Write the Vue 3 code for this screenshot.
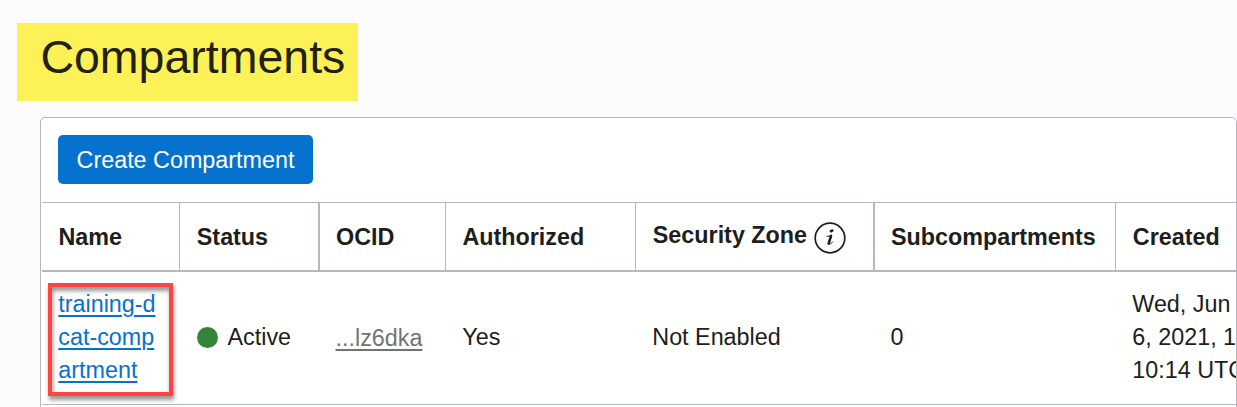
<script setup>
const columns = [
  { key: 'name', label: 'Name' },
  { key: 'status', label: 'Status', thick: true },
  { key: 'ocid', label: 'OCID' },
  { key: 'authorized', label: 'Authorized' },
  { key: 'zone', label: 'Security Zone', info: true, thick: true },
  { key: 'subs', label: 'Subcompartments' },
  { key: 'created', label: 'Created', last: true },
]
const nameLines = ['training-d', 'cat-comp', 'artment']
const createdLines = ['Wed, Jun', '6, 2021, 1', '10:14 UTC']
</script>

<template>
  <main class="page">
    <h1 class="title">Compartments</h1>
    <section class="panel">
      <div class="toolbar">
        <button class="create" type="button">Create Compartment</button>
      </div>
      <div class="grid head">
        <div
          v-for="c in columns"
          :key="c.key"
          class="th"
          :class="[c.key, { thick: c.thick, last: c.last }]"
        >
          <span>{{ c.label }}</span>
          <svg v-if="c.info" class="info" width="32" height="32" viewBox="0 0 32 32">
            <circle cx="16" cy="16" r="14.8" fill="none" stroke="#201e1c" stroke-width="1.7" />
            <ellipse cx="17.6" cy="8.8" rx="2.1" ry="1.5" fill="#201e1c" transform="rotate(-20 17.6 8.8)" />
            <path d="M13 14.4 C14.6 14.3 16 13.9 17.8 13.1 L15.2 21.2 C14.9 22.9 16.4 22.4 18.8 19.8" fill="none" stroke="#201e1c" stroke-width="1" stroke-linecap="round" />
            <path d="M17 13.9 L14.6 21.6" fill="none" stroke="#201e1c" stroke-width="2.5" stroke-linecap="round" />
          </svg>
        </div>
      </div>
      <div class="grid row">
        <div class="name-cell">
          <div class="frame">
            <a class="link"><span v-for="l in nameLines" :key="l" class="line">{{ l }}</span></a>
          </div>
        </div>
        <div class="td active"><span class="dot"></span>Active</div>
        <div class="td ocid-cell"><span class="ocid-link">...lz6dka</span></div>
        <div class="td">Yes</div>
        <div class="td">Not Enabled</div>
        <div class="td subs-cell">0</div>
        <div class="td">
          <div><div v-for="l in createdLines" :key="l">{{ l }}</div></div>
        </div>
      </div>
    </section>
  </main>
</template>

<style>
body {
  background: #fcfcfc;
  overflow: hidden;
}
</style>

<style scoped>
.page {
  box-sizing: border-box;
  width: 1237px;
  height: 407px;
  padding-top: 23px;
  overflow: hidden;
  background: #fcfcfc;
  color: #201e1c;
  font: 23.33px/33px "Liberation Sans", Arial, sans-serif;
}
.title {
  box-sizing: border-box;
  width: 341px;
  height: 78px;
  margin: 0 0 16px 17px;
  padding-left: 23.4px;
  background: #fcf157;
  color: #23210d;
  font-size: 46.5px;
  font-weight: 400;
  line-height: 68px;
}
.panel {
  box-sizing: border-box;
  width: 1197px;
  height: 330px;
  margin-left: 40px;
  border: 1px solid #b3b9c3;
  border-radius: 5px;
  background: #fff;
  overflow: hidden;
}
.toolbar {
  box-sizing: border-box;
  height: 84px;
  padding: 17px;
}
.create {
  display: block;
  width: 255px;
  height: 49px;
  padding: 2px 0 0;
  border: 0;
  border-radius: 5px;
  background: #0572ce;
  color: #fff;
  font: inherit;
}
.grid {
  display: grid;
  grid-template-columns: 138px 140px 126px 190px 239px 241px 120px;
  margin-left: 1px;
}
.head {
  box-sizing: border-box;
  height: 70px;
  border-top: 1px solid #b3b9c3;
  border-bottom: 2px solid #b3b9c3;
}
.th {
  display: flex;
  align-items: center;
  padding: 2px 0 0 16.4px;
  border-right: 1px solid #b3b9c3;
  font-weight: 700;
  white-space: nowrap;
}
.th.thick {
  border-right-width: 2px;
}
.th.last {
  border-right: 0;
}
.zone span {
  margin-top: -4px;
}
.th.status,
.th.zone,
.th.created {
  padding-left: 16.8px;
}
.th.ocid,
.th.subs {
  padding-left: 16px;
}
.info {
  flex: none;
  margin-left: 7.2px;
}
.row {
  box-sizing: border-box;
  height: 133px;
  border-bottom: 1px solid #b3b9c3;
}
.td {
  display: flex;
  align-items: center;
  padding: 0 0 2px 16.3px;
  white-space: nowrap;
}
.td.active {
  padding-left: 17px;
}
.td.ocid-cell {
  padding: 0 0 0 15.5px;
}
.td.subs-cell {
  padding-left: 15.5px;
}
.name-cell {
  padding: 11px 0 0 6px;
}
.frame {
  box-sizing: border-box;
  width: 125px;
  height: 113px;
  padding: 1px 0 0 6.3px;
  border: 4px solid #ff4242;
  box-shadow: 1px 4px 4px rgba(0, 0, 0, 0.4), inset 1px 4px 4px rgba(0, 0, 0, 0.4);
}
.link {
  color: #0572ce;
}
.line {
  display: block;
  text-decoration: underline;
  text-decoration-thickness: 2px;
  text-underline-offset: 3px;
}
.dot {
  width: 21px;
  height: 21px;
  margin: 0 9.5px 0 0;
  border-radius: 50%;
  background: #348539;
}
.ocid-link {
  color: #757371;
  text-decoration: underline;
  text-decoration-thickness: 2px;
  text-underline-offset: 3px;
}
</style>
